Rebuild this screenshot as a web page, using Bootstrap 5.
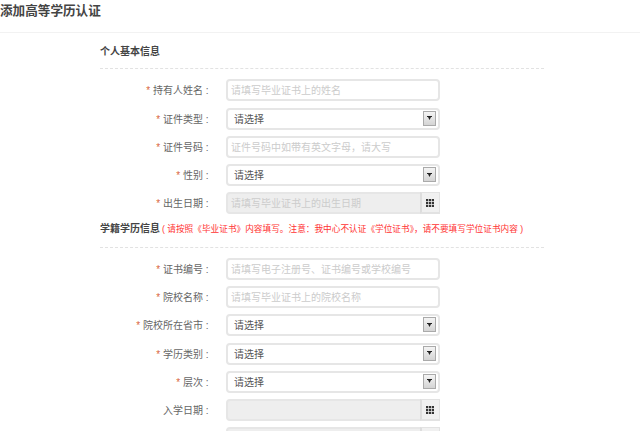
<!DOCTYPE html>
<html lang="zh-CN">
<head>
  <meta charset="UTF-8" />
  <meta name="viewport" content="width=device-width, initial-scale=1.0"/>
  <title>添加高等学历认证</title>
  <link href="https://cdn.jsdelivr.net/npm/bootstrap@5.3.0/dist/css/bootstrap.min.css" rel="stylesheet"/>
  <style>
    html, body { height: 431px; overflow: hidden; }
    body { font-family: "Liberation Sans", "Noto Sans CJK SC", sans-serif; font-size: 10px; color: #666; background: #fff; }
    .page-title { height: 33px; margin: 0; padding-top: 3px; font-size: 12.6px; line-height: 17px; font-weight: 700; color: #444; border-bottom: 1px solid #f2f2f2; }
    .form-area { width: 444px; margin-left: 100px; }
    .sec-head { border-bottom: 1px dashed #e2e2e2; color: #444; font-weight: 700; line-height: 14px; white-space: nowrap; }
    .sec-first { height: 36px; padding-top: 12px; margin-bottom: 10.4px; }
    .sec-second { height: 27.35px; padding-top: 1px; margin-bottom: 10px; }
    .sec-note { color: #f33; font-weight: 400; font-size: 8.66px; margin-left: 2px; }
    .form-line { height: 22px; margin-bottom: 6.25px; }
    .line-label { width: 111.6px; margin-left: -3px; margin-right: 17.4px; padding-top: 1px; text-align: right; line-height: 22px; font-size: 10px; white-space: nowrap; }
    .req { color: #d9663c; }
    .field-box { position: relative; width: 214px; height: 22px; flex: none; }
    .field-box .form-control, .field-box .form-select {
      height: 22px; min-height: 22px; padding: 1px 3px 0; font-size: 10px; line-height: 18px; color: #555;
      border: 2px solid #e6e6e6; border-radius: 4px; background-image: none; box-shadow: none;
    }
    .field-box .form-select { padding-left: 6px; }
    .field-box .form-control::placeholder { color: #ccc; opacity: 1; }
    .field-box .form-control:disabled { background: #eee; border-radius: 4px 0 0 4px; }
    .select-arrow { position: absolute; top: 3px; right: 4px; width: 13px; height: 15px; border: 1px solid #aaa; background: linear-gradient(#f4f4f4, #d4d4d4); display: flex; align-items: center; justify-content: center; pointer-events: none; }
    .date-btn { position: absolute; top: 0; right: 0; width: 20px; height: 22px; background: #f0f0f0; border: 1px solid #e2e2e2; border-left: 2px solid #ddd; border-bottom-width: 2px; display: flex; align-items: center; justify-content: center; }
  </style>
</head>
<body>
  <h1 class="page-title">添加高等学历认证</h1>
  <div class="form-area" id="formArea"></div>

  <script src="https://cdn.jsdelivr.net/npm/bootstrap@5.3.0/dist/js/bootstrap.bundle.min.js"></script>
  <script>
    const arrowSvg = '<svg width="5" height="4" viewBox="0 0 5 4"><path d="M0 0h5v1H4L2.5 4 1 1H0z" fill="#222"/></svg>';
    const gridSvg = '<svg width="8" height="8" viewBox="0 0 8 8" fill="#333"><path d="M0 0h2.2v2.2H0zM2.9 0h2.2v2.2H2.9zM5.8 0H8v2.2H5.8zM0 2.9h2.2v2.2H0zM2.9 2.9h2.2v2.2H2.9zM5.8 2.9H8v2.2H5.8zM0 5.8h2.2V8H0zM2.9 5.8h2.2V8H2.9zM5.8 5.8H8V8H5.8z"/></svg>';

    function row(label, required, type, text) {
      let field = '';
      if (type === 'input') {
        field = `<input class="form-control" placeholder="${text}">`;
      } else if (type === 'select') {
        field = `<select class="form-select"><option>请选择</option></select><span class="select-arrow">${arrowSvg}</span>`;
      } else {
        field = `<input class="form-control" disabled placeholder="${text}"><span class="date-btn">${gridSvg}</span>`;
      }
      const caption = label ? `${required ? '<span class="req">*</span> ' : ''}${label}&nbsp;:` : '';
      return `<div class="form-line d-flex">
        <label class="line-label">${caption}</label>
        <div class="field-box">${field}</div>
      </div>`;
    }

    const first = [
      ['持有人姓名', true, 'input', '请填写毕业证书上的姓名'],
      ['证件类型', true, 'select'],
      ['证件号码', true, 'input', '证件号码中如带有英文字母，请大写'],
      ['性别', true, 'select'],
      ['出生日期', true, 'date', '请填写毕业证书上的出生日期']
    ];
    // the last row is cut by the bottom of the window, its label never shows
    const second = [
      ['证书编号', true, 'input', '请填写电子注册号、证书编号或学校编号'],
      ['院校名称', true, 'input', '请填写毕业证书上的院校名称'],
      ['院校所在省市', true, 'select'],
      ['学历类别', true, 'select'],
      ['层次', true, 'select'],
      ['入学日期', false, 'date', ''],
      ['', false, 'date', '']
    ];

    document.getElementById('formArea').innerHTML =
      '<div class="sec-head sec-first">个人基本信息</div>' +
      first.map(r => row(...r)).join('') +
      '<div class="sec-head sec-second">学籍学历信息<span class="sec-note">( 请按照《毕业证书》内容填写。注意：我中心不认证《学位证书》，请不要填写学位证书内容 )</span></div>' +
      second.map(r => row(...r)).join('');
  </script>
</body>
</html>
